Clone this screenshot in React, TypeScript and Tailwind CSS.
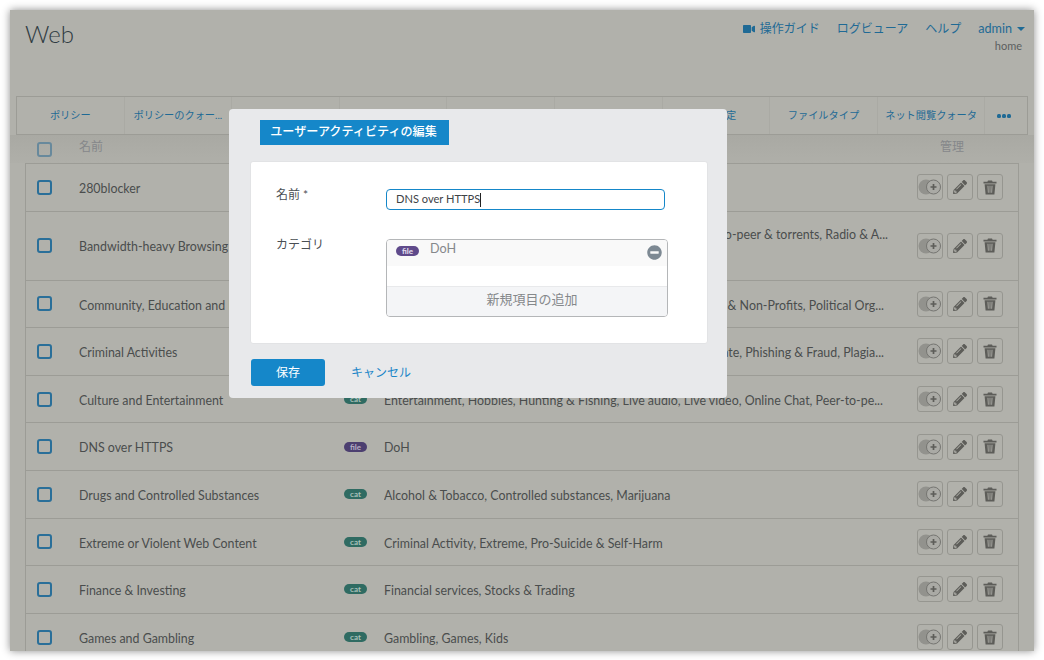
import { FaVideo, FaPencilAlt, FaMinusCircle } from "react-icons/fa";

const rows = [
  { name: "280blocker", badge: "cat", desc: "" },
  { name: "Bandwidth-heavy Browsing", badge: "cat", desc: "Peer-to-peer & torrents, Radio & A...", tall: true, right: "justify-end" },
  { name: "Community, Education and Religion", badge: "cat", desc: "Charity & Non-Profits, Political Org...", right: "justify-end pr-[4px]" },
  { name: "Criminal Activities", badge: "cat", desc: "Hate, Phishing & Fraud, Plagia...", right: "justify-end pr-[4px]" },
  { name: "Culture and Entertainment", badge: "cat", desc: "Entertainment, Hobbies, Hunting & Fishing, Live audio, Live video, Online Chat, Peer-to-pe..." },
  { name: "DNS over HTTPS", badge: "file", desc: "DoH" },
  { name: "Drugs and Controlled Substances", badge: "cat", desc: "Alcohol & Tobacco, Controlled substances, Marijuana" },
  { name: "Extreme or Violent Web Content", badge: "cat", desc: "Criminal Activity, Extreme, Pro-Suicide & Self-Harm" },
  { name: "Finance & Investing", badge: "cat", desc: "Financial services, Stocks & Trading" },
  { name: "Games and Gambling", badge: "cat", desc: "Gambling, Games, Kids" },
];

const tabs = ["ポリシー", "ポリシーのクォー...", "", "", "", "", "追加設定", "ファイルタイプ", "ネット閲覧クォータ"];

function Badge({ kind, light }: { kind: string; light?: boolean }) {
  const color = kind === "file" ? (light ? "bg-[#5f4a8b] text-[#e6e0f0]" : "bg-[#4c3f70] text-[#b5aec4]") : "bg-[#2f6b62] text-[#a9c0ba]";
  return (
    <span className={`flex h-[10px] w-[23px] items-center justify-center rounded-full text-[8px] font-bold leading-none ${color}`}>
      {kind}
    </span>
  );
}

function Trash() {
  return (
    <svg width="14" height="15" viewBox="0 0 14 15" fill="#5d5d59">
      <path d="M5 0.5h4l.6 1.2H13.5v1.7H.5V1.7h3.9z" />
      <path d="M1.6 4.2h10.8l-1 10.3H2.6zM4.5 5.8l.4 7h.8l-.3-7zM6.6 5.8v7h.8v-7zM8.6 5.8l-.3 7h.8l.4-7z" fillRule="evenodd" />
    </svg>
  );
}

function ToggleAdd() {
  return (
    <svg width="24" height="16" viewBox="0 0 24 16">
      <circle cx="8" cy="8" r="7.5" fill="#92928d" />
      <circle cx="15.5" cy="8" r="7" fill="#aaaaa5" stroke="#757571" strokeWidth="1" />
      <path d="M15.5 5v6M12.5 8h6" stroke="#5d5d59" strokeWidth="1.7" />
    </svg>
  );
}

function ActionButton({ children }: { children: React.ReactNode }) {
  return (
    <div className="flex h-[26px] w-[26px] items-center justify-center rounded-[3px] border border-[#969690]">
      {children}
    </div>
  );
}

function Checkbox({ faded }: { faded?: boolean }) {
  return <div className={`h-[15px] w-[15px] shrink-0 rounded-[3px] border-2 ${faded ? "border-[#68899c]" : "border-[#2a6f99]"}`} />;
}

function Row({ row }: { row: (typeof rows)[number] }) {
  return (
    <div className={`flex shrink-0 items-center border-b border-[#9c9c96] ${row.tall ? "h-[69px]" : "h-[47.6px]"}`}>
      <div className="ml-[11px]"><Checkbox /></div>
      <div className="ml-[27px] w-[265px] truncate pt-[4px] text-[12.4px] text-[#4a4d4d]">{row.name}</div>
      <div className="flex w-[40px] justify-start"><Badge kind={row.badge} /></div>
      <div className={`flex w-[504px] overflow-hidden whitespace-nowrap pt-[4px] text-[12.4px] text-[#4a4d4d] ${row.right ?? ""} ${row.tall ? "mb-6" : ""}`}>
        {row.desc}
      </div>
      <div className="ml-[29px] flex gap-[4px]">
        <ActionButton><ToggleAdd /></ActionButton>
        <ActionButton><FaPencilAlt className="h-[14px] w-[14px] text-[#5d5d59]" /></ActionButton>
        <ActionButton><Trash /></ActionButton>
      </div>
    </div>
  );
}

export default function App() {
  return (
    <div className="h-[660px] w-[1044px] overflow-hidden bg-white p-[10px] pb-[9px] font-['Lato','Noto_Sans_CJK_JP',sans-serif]">
      <div className="relative flex h-full flex-col overflow-hidden bg-[#b1b1ab] shadow-[0_0_8px_rgba(0,0,0,0.45)]">
        <header className="flex h-[86px] shrink-0 justify-between pl-[15px] pr-[9px] pt-[6px]">
          <h1 className="pt-px text-[24px] font-light leading-[34px] text-[#2f3b42]">Web</h1>
          <div className="flex flex-col items-end">
            <div className="flex items-center pt-px text-[12px] leading-[24px] text-[#1f6a95]">
              <FaVideo className="mr-[5px] h-[12px] w-[12px]" />
              <span>操作ガイド</span>
              <span className="ml-[17px]">ログビューア</span>
              <span className="ml-[17px]">ヘルプ</span>
              <span className="ml-[17px] text-[12.6px]">admin</span>
              <span className="ml-[5px] h-0 w-0 border-x-[4px] border-t-[4px] border-x-transparent border-t-[#1f6a95]" />
            </div>
            <div className="pr-[3px] text-[11px] leading-[10px] text-[#5c5f5f]">home</div>
          </div>
        </header>

        <nav className="mx-[6px] flex h-[39px] shrink-0 border border-[#9c9c96]">
          {tabs.map((t, i) => (
            <div key={i} className="flex w-[107.6px] shrink-0 items-center justify-center border-r border-[#aaaaa4] text-[10.2px] text-[#1f6a95]">
              {t}
            </div>
          ))}
          <div className="flex flex-1 items-center justify-center gap-[1px] pr-[4px]">
            <span className="h-[4px] w-[4px] rounded-[1.5px] bg-[#1f6a95]" />
            <span className="h-[4px] w-[4px] rounded-[1.5px] bg-[#1f6a95]" />
            <span className="h-[4px] w-[4px] rounded-[1.5px] bg-[#1f6a95]" />
          </div>
        </nav>

        <div className="flex h-[28px] shrink-0 items-center bg-gradient-to-b from-[#a9a9a3] to-[#afafa9] pb-[4px] pl-[27px] text-[12px] text-[#85878a]">
          <div className="translate-y-[2px]"><Checkbox faded /></div>
          <span className="ml-[27px] flex-1">名前</span>
          <span className="mr-[70px]">管理</span>
        </div>

        <div className="mx-[15px] flex flex-1 flex-col border-x border-t border-[#9c9c96]">
          {rows.map((r) => <Row key={r.name} row={r} />)}
        </div>

        <div className="absolute left-[219px] top-[99px] flex h-[289px] w-[498px] flex-col rounded-[4px] bg-[#e8e9eb] pl-[21px] pr-[19px] pt-[11px]">
          <div className="ml-[10px] flex h-[25px] w-[189px] items-center justify-center bg-[#1587c9] pr-[2px] text-[12.1px] font-medium text-white">
            ユーザーアクティビティの編集
          </div>
          <div className="mt-[16px] h-[183px] rounded-[3px] border border-[#e2e3e5] bg-white pl-[25px] pt-[27px] text-[12px] text-[#4a4f54]">
            <div className="flex items-start">
              <span className="-mt-[3px] w-[110px]">名前 *</span>
              <div className="flex h-[21px] w-[279px] items-center rounded-[4px] border border-[#1587c9] pl-[9px] text-[11.1px] text-[#3e4347]">
                DNS over HTTPS<span className="h-[14px] w-px bg-[#222]" />
              </div>
            </div>
            <div className="mt-[29px] flex items-start">
              <span className="-mt-[3px] w-[110px]">カテゴリ</span>
              <div className="flex h-[78px] w-[282px] flex-col overflow-hidden rounded-[4px] border border-[#b4b6b8]">
                <div className="relative flex h-[26px] shrink-0 bg-[#f9f9f9] pl-[9px]">
                  <span className="mt-[6px]"><Badge kind="file" light /></span>
                  <span className="ml-[11px] text-[12.6px] text-[#85888b]">DoH</span>
                  <FaMinusCircle className="absolute right-[5px] top-[5px] h-[15px] w-[15px] text-[#7d8993]" />
                </div>
                <div className="h-[21px] shrink-0 border-b border-[#e8e9eb]" />
                <div className="flex flex-1 items-center justify-center bg-[#f4f5f7] pb-[4px] pl-[10px] text-[13px] text-[#85888b]">新規項目の追加</div>
              </div>
            </div>
          </div>
          <div className="mt-[15px] flex items-center">
            <div className="ml-px flex h-[27px] w-[74px] items-center justify-center rounded-[3px] bg-[#1587c9] text-[12px] text-white">保存</div>
            <span className="ml-[26px] text-[12px] text-[#1b86c8]">キャンセル</span>
          </div>
        </div>
      </div>
    </div>
  );
}
